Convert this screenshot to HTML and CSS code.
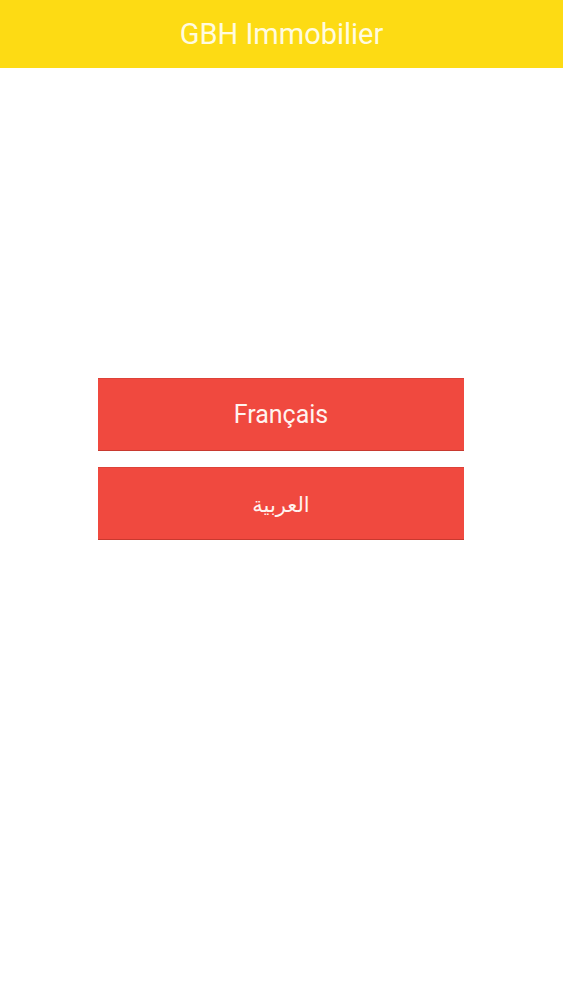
FILE: index.html
```html
<!DOCTYPE html>
<html lang="fr">
<head>
<meta charset="utf-8">
<title>GBH Immobilier</title>
<link rel="stylesheet" href="styles.css">
</head>
<body>
<header class="appbar">
  <h1 class="appbar-title">GBH Immobilier</h1>
</header>
<main class="content">
  <div class="lang-list">
    <button class="lang-btn" type="button">Français</button>
    <button class="lang-btn lang-ar" type="button" dir="rtl" lang="ar">العربية</button>
  </div>
</main>
</body>
</html>
```

FILE: styles.css
```css
html, body {
  margin: 0;
  padding: 0;
  background: #ffffff;
  font-family: Roboto, "Noto Sans", "DejaVu Sans", sans-serif;
}

.appbar {
  height: 68px;
  background: #fddb14;
  display: flex;
  align-items: center;
  justify-content: center;
}

.appbar-title {
  margin: 0 0 1px 0;
  font-size: 29px;
  font-weight: 400;
  color: #fffbe0;
}

.content {
  display: flex;
  justify-content: center;
  padding-top: 310px;
  padding-right: 1px;
}

.lang-list {
  width: 366px;
  display: flex;
  flex-direction: column;
  gap: 16px;
}

.lang-btn {
  height: 73px;
  border: none;
  border-top: 1px solid #dd4238;
  border-bottom: 1px solid #c8392f;
  background: #f0493f;
  color: #fff3ef;
  font-family: Roboto, "Noto Sans", "DejaVu Sans", sans-serif;
  font-size: 25px;
  font-weight: 400;
  padding: 0;
  cursor: pointer;
}

.lang-ar {
  font-family: "Noto Sans", "DejaVu Sans", sans-serif;
  font-size: 21px;
}
```
